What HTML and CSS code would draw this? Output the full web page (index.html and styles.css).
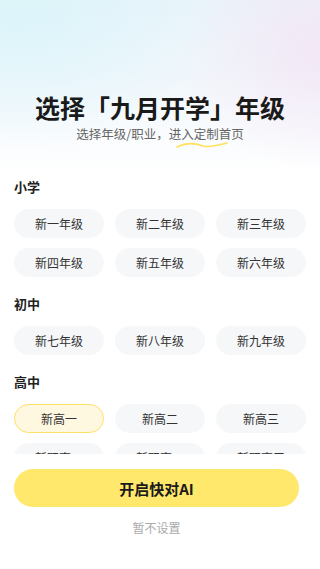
FILE: index.html
```html
<!DOCTYPE html>
<html lang="zh">
<head>
    <meta charset="UTF-8">
    <meta name="viewport" content="width=device-width, initial-scale=1.0">
    <title>选择年级</title>
    <link rel="stylesheet" href="styles.css">
</head>
<body>
    <div class="page">
        <div class="scroll">
            <h1 class="title">选择「九月开学」年级</h1>
            <p class="subtitle">选择年级/职业，进<span class="mark">入定制<svg class="squiggle" width="54" height="8" viewBox="0 0 54 8"><path d="M2 6 C 12 1, 20 2, 28 5 C 36 7, 44 4, 52 2" fill="none" stroke="#FFE15A" stroke-width="1.6" stroke-linecap="round"/></svg></span>首页</p>

            <div class="section">
                <div class="label">小学</div>
                <div class="chips">
                    <div class="chip">新一年级</div>
                    <div class="chip">新二年级</div>
                    <div class="chip">新三年级</div>
                    <div class="chip">新四年级</div>
                    <div class="chip">新五年级</div>
                    <div class="chip">新六年级</div>
                </div>
            </div>

            <div class="section">
                <div class="label">初中</div>
                <div class="chips">
                    <div class="chip">新七年级</div>
                    <div class="chip">新八年级</div>
                    <div class="chip">新九年级</div>
                </div>
            </div>

            <div class="section">
                <div class="label">高中</div>
                <div class="chips">
                    <div class="chip active">新高一</div>
                    <div class="chip">新高二</div>
                    <div class="chip">新高三</div>
                    <div class="chip">新职高一</div>
                    <div class="chip">新职高二</div>
                    <div class="chip">新职高三</div>
                </div>
            </div>
        </div>

        <div class="footer">
            <button class="start">开启快对AI</button>
            <div class="skip">暂不设置</div>
        </div>
    </div>
</body>
</html>
```

FILE: styles.css
```css
* {
    box-sizing: border-box;
}

body {
    margin: 0;
    font-family: "Noto Sans CJK SC", "Noto Sans", sans-serif;
    color: #222;
    background: #fff;
}

.page {
    width: 320px;
    height: 569px;
    display: flex;
    flex-direction: column;
    background:
        radial-gradient(ellipse 200px 130px at 20px 20px, rgba(214, 245, 250, 0.7), rgba(214, 245, 250, 0)),
        radial-gradient(ellipse 140px 120px at 320px 50px, rgba(244, 230, 245, 0.9), rgba(244, 230, 245, 0)),
        linear-gradient(to bottom, #e9f4fa 0px, #f0f6fb 70px, #ffffff 175px);
}

.scroll {
    height: 454px;
    flex: none;
    overflow: hidden;
    padding: 89px 14px 0;
}

.title {
    margin: 0;
    font-size: 25px;
    line-height: 36px;
    font-weight: 700;
    text-align: center;
    color: #1a1a1a;
}

.subtitle {
    margin: 0;
    font-size: 12.5px;
    line-height: 18px;
    text-align: center;
    color: #666;
}

.mark {
    position: relative;
}

.squiggle {
    position: absolute;
    left: -6px;
    bottom: -6px;
}

.section {
    margin-top: 35px;
}

.section + .section {
    margin-top: 18px;
}

.label {
    font-size: 13px;
    line-height: 18px;
    font-weight: 700;
    color: #222;
    margin-bottom: 13px;
}

.chips {
    display: grid;
    grid-template-columns: repeat(3, 1fr);
    column-gap: 11px;
    row-gap: 10px;
}

.chip {
    height: 29px;
    border-radius: 15px;
    background: #f6f7f9;
    font-size: 12px;
    color: #333;
    display: flex;
    align-items: center;
    justify-content: center;
    border: 1px solid #f6f7f9;
}

.chip.active {
    background: #fff8e1;
    border-color: #ffe066;
}

.footer {
    padding: 15px 21px 0 14px;
    display: flex;
    flex-direction: column;
    align-items: center;
}

.start {
    width: 100%;
    height: 38px;
    border: none;
    border-radius: 19px;
    background: #ffe86b;
    font-family: inherit;
    font-size: 15px;
    font-weight: 700;
    color: #1a1a1a;
}

.skip {
    margin-top: 12px;
    font-size: 12px;
    line-height: 18px;
    color: #aaa;
}
```
